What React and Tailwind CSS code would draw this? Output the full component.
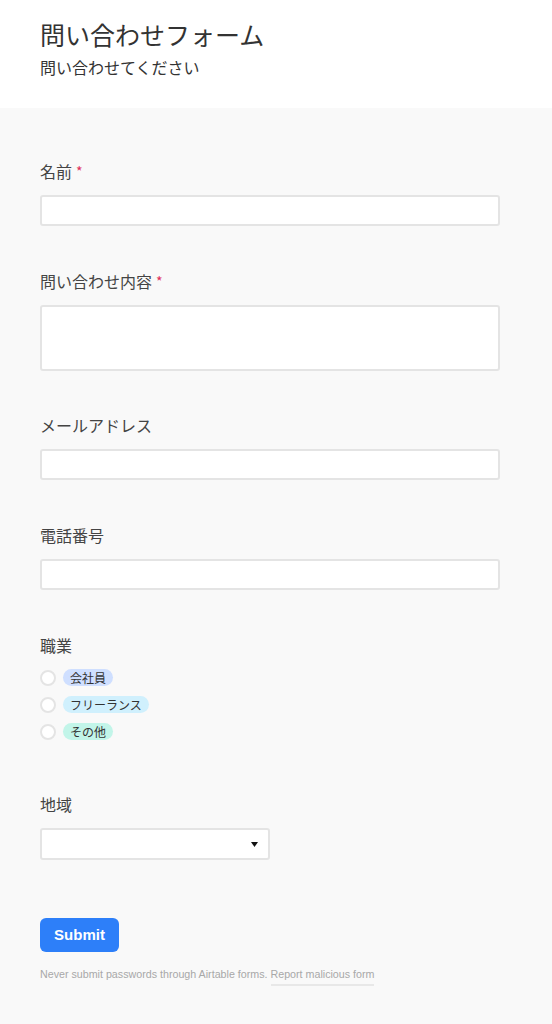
const jp = { fontFamily: '"Noto Sans CJK JP", "Noto Sans", sans-serif' };

function Label({ children, required }) {
  return (
    <div className="h-5 flex items-center text-[16px] leading-5 text-[#444]">
      <span>{children}</span>
      {required && <span className="ml-1 text-[14px] text-[#e02e5a]">*</span>}
    </div>
  );
}

function TextInput() {
  return <div className="mt-[14px] h-[31px] w-[460px] rounded-[3px] border-2 border-[#e4e4e4] bg-white" />;
}

const choices = [
  { label: '会社員', color: 'bg-[#cfdfff]' },
  { label: 'フリーランス', color: 'bg-[#d0f0fd]' },
  { label: 'その他', color: 'bg-[#c2f5e9]' },
];

export default function App() {
  return (
    <div className="min-h-screen bg-[#f9f9f9]" style={jp}>
      {/* header */}
      <div className="h-[108px] bg-white px-10 pt-[18px]">
        <h1 className="text-[25px] leading-8 text-[#333]">問い合わせフォーム</h1>
        <p className="mt-[7px] text-[16px] leading-5 text-[#333]">問い合わせてください</p>
      </div>

      <div className="px-10 pt-[53px] pb-10">
        <div>
          <Label required>名前</Label>
          <TextInput />
        </div>

        <div className="mt-[45px]">
          <Label required>問い合わせ内容</Label>
          <div className="mt-[14px] h-[66px] w-[460px] rounded-[3px] border-2 border-[#e4e4e4] bg-white" />
        </div>

        <div className="mt-[44px]">
          <Label>メールアドレス</Label>
          <TextInput />
        </div>

        <div className="mt-[45px]">
          <Label>電話番号</Label>
          <TextInput />
        </div>

        <div className="mt-[45px]">
          <Label>職業</Label>
          <div className="mt-[9px] flex flex-col">
            {choices.map((c) => (
              <div key={c.label} className="flex h-[27px] items-center">
                <span className="h-4 w-4 rounded-full border-2 border-[#e4e4e4] bg-white" />
                <span className={`ml-[7px] rounded-full px-[7px] text-[12px] leading-[17px] text-[#333] ${c.color}`}>
                  {c.label}
                </span>
              </div>
            ))}
          </div>
        </div>

        <div className="mt-[49px]">
          <Label>地域</Label>
          <div className="mt-[14px] flex h-[32px] w-[230px] items-center justify-end rounded-[3px] border-2 border-[#e4e4e4] bg-white pr-[10px]">
            <svg width="7" height="5" viewBox="0 0 7 5">
              <path d="M0 0h7L3.5 5z" fill="#111" />
            </svg>
          </div>
        </div>

        <button
          className="mt-[58px] h-[34px] w-[79px] rounded-[6px] bg-[#2d7ff9] text-[15px] font-bold text-white"
          style={{ fontFamily: '"Liberation Sans", Arial, sans-serif' }}
        >
          Submit
        </button>

        <p
          className="mt-[15px] text-[10.7px] leading-[14px] text-[#a8a8a8]"
          style={{ fontFamily: '"Liberation Sans", Arial, sans-serif' }}
        >
          Never submit passwords through Airtable forms.{' '}
          <span className="inline-block border-b-2 border-[#e8e8e8] pb-[3px]">Report malicious form</span>
        </p>
      </div>
    </div>
  );
}
